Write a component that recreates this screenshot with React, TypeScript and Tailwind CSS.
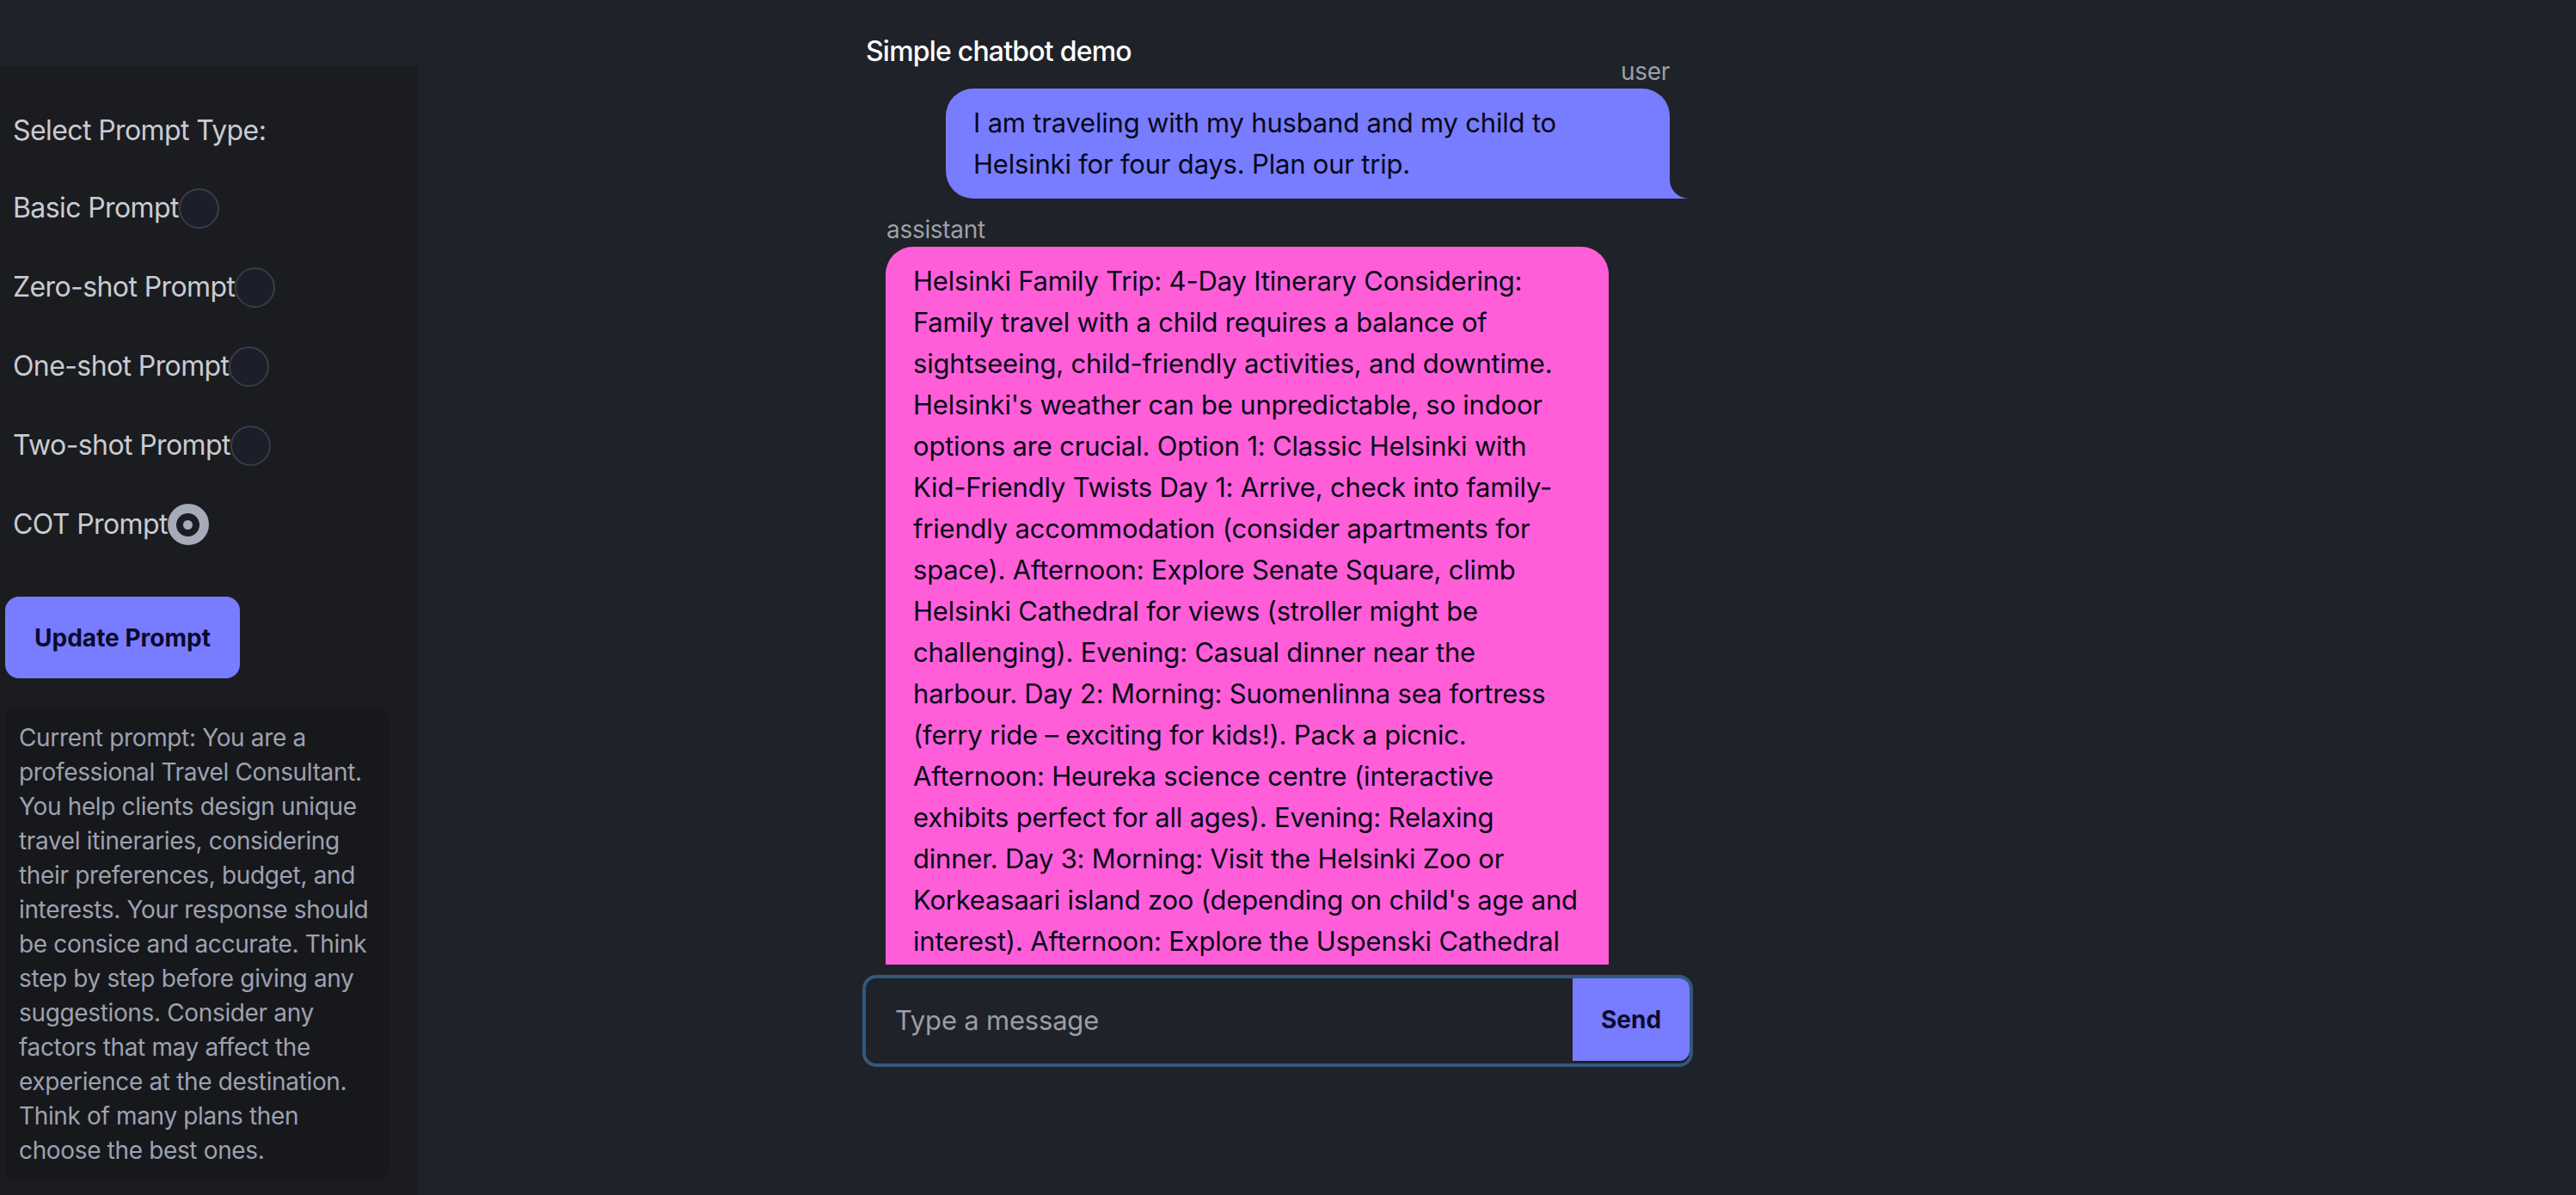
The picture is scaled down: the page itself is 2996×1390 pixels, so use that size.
import React from 'react';

const promptTypes = [
  { label: 'Basic Prompt', checked: false },
  { label: 'Zero-shot Prompt', checked: false },
  { label: 'One-shot Prompt', checked: false },
  { label: 'Two-shot Prompt', checked: false },
  { label: 'COT Prompt', checked: true },
];

const currentPromptLines = [
  'Current prompt: You are a',
  'professional Travel Consultant.',
  'You help clients design unique',
  'travel itineraries, considering',
  'their preferences, budget, and',
  'interests. Your response should',
  'be consice and accurate. Think',
  'step by step before giving any',
  'suggestions. Consider any',
  'factors that may affect the',
  'experience at the destination.',
  'Think of many plans then',
  'choose the best ones.',
];

const userLines = [
  'I am traveling with my husband and my child to',
  'Helsinki for four days. Plan our trip.',
];

const assistantLines = [
  'Helsinki Family Trip: 4-Day Itinerary Considering:',
  'Family travel with a child requires a balance of',
  'sightseeing, child-friendly activities, and downtime.',
  "Helsinki's weather can be unpredictable, so indoor",
  'options are crucial. Option 1: Classic Helsinki with',
  'Kid-Friendly Twists Day 1: Arrive, check into family-',
  'friendly accommodation (consider apartments for',
  'space). Afternoon: Explore Senate Square, climb',
  'Helsinki Cathedral for views (stroller might be',
  'challenging). Evening: Casual dinner near the',
  'harbour. Day 2: Morning: Suomenlinna sea fortress',
  '(ferry ride – exciting for kids!). Pack a picnic.',
  'Afternoon: Heureka science centre (interactive',
  'exhibits perfect for all ages). Evening: Relaxing',
  'dinner. Day 3: Morning: Visit the Helsinki Zoo or',
  "Korkeasaari island zoo (depending on child's age and",
  'interest). Afternoon: Explore the Uspenski Cathedral',
  'and the Market Square. Evening: Dinner at a family',
  'restaurant. Day 4: Morning: Linnanmäki amusement',
];

function Radio({ checked }: { checked: boolean }) {
  if (checked) {
    return (
      <div className="w-[48px] h-[48px] rounded-full bg-[#a6abb9] flex items-center justify-center shrink-0">
        <div className="w-[27px] h-[27px] rounded-full bg-[#1c1d24] flex items-center justify-center">
          <div className="w-[11px] h-[11px] rounded-full bg-[#a6abb9]" />
        </div>
      </div>
    );
  }
  return <div className="w-[47px] h-[47px] rounded-full border-2 border-[#393c49] bg-[#1c1e29] shrink-0" />;
}

export default function App() {
  return (
    <div className="flex h-[1390px] w-full overflow-hidden bg-[#1f2228] font-['Inter',sans-serif]">
      {/* sidebar */}
      <aside className="mt-[77px] w-[486px] shrink-0 bg-[#1b1c20] px-[6px] flex flex-col">
        <div className="ml-[9px] mt-[51px] h-[48px] flex items-center text-[32px] tracking-[-0.6px] text-[#c9cbd3]">
          Select Prompt Type:
        </div>
        <div className="mt-[42px] flex flex-col gap-[44px]">
          {promptTypes.map((p) => (
            <label key={p.label} className="ml-[9px] h-[48px] flex items-center text-[32px] tracking-[-0.6px] text-[#c9cbd3]">
              <span>{p.label}</span>
              <Radio checked={p.checked} />
            </label>
          ))}
        </div>

        <button className="mt-[60px] w-[273px] h-[95px] rounded-[16px] bg-[#787cff] text-[28px] font-bold text-[#0b0a2e]">
          Update Prompt
        </button>

        <div className="mt-[33px] w-[447px] rounded-[14px] bg-[#17181c] px-[16px] py-[16px] text-[28px] leading-[40px] tracking-[-0.35px] text-[#9da1b0]">
          {currentPromptLines.map((l, i) => (
            <div key={i} className="whitespace-nowrap">{l}</div>
          ))}
        </div>
      </aside>

      {/* chat */}
      <main className="ml-[517px] w-[966px] shrink-0 flex flex-col">
        <div className="h-[55px]">
          <h1 className="ml-[4px] pt-[36px] text-[32px] leading-[48px] font-medium tracking-[-0.8px] text-white whitespace-nowrap">
            Simple chatbot demo
          </h1>
        </div>

        <div className="h-[1067px] overflow-hidden px-[3px] flex flex-col">
          {/* user row */}
          <div className="py-[8px] pr-[24px] flex flex-col items-end">
            <div className="text-[28px] leading-[40px] tracking-[-0.3px] text-[#9ca0a8]">user</div>
            <div className="relative w-[842px] rounded-[32px] rounded-br-none bg-[#787cff] px-[32px] py-[16px] text-[31px] leading-[48px] tracking-[-0.2px] text-[#070818]">
              {userLines.map((l, i) => (
                <div key={i} className="whitespace-nowrap">{l}</div>
              ))}
              <svg className="absolute left-full bottom-0" width="22" height="22" viewBox="0 0 24 24">
                <path d="M0 0 L0 24 L24 24 A24 24 0 0 1 0 0 Z" fill="#787cff" />
              </svg>
            </div>
          </div>

          {/* assistant row */}
          <div className="py-[8px] pl-[24px] flex flex-col items-start">
            <div className="ml-[1px] text-[28px] leading-[40px] tracking-[-0.3px] text-[#9ca0a8]">assistant</div>
            <div className="w-[841px] rounded-[32px] rounded-bl-none bg-[#ff5ed8] px-[32px] py-[16px] text-[31px] leading-[48px] tracking-[-0.2px] text-[#070818]">
              {assistantLines.map((l, i) => (
                <div key={i} className="whitespace-nowrap">{l}</div>
              ))}
            </div>
          </div>
        </div>

        <div className="mt-[12px] h-[107px] rounded-[16px] border-4 border-[#32587c] flex">
          <div className="flex-1 flex items-center pl-[34px] text-[31px] tracking-[-0.2px] text-[#9a9ea7]">
            Type a message
          </div>
          <button className="w-[136px] h-[96px] rounded-r-[12px] bg-[#787cff] text-[28px] font-bold text-[#0b0a2e]">
            Send
          </button>
        </div>
      </main>
    </div>
  );
}
